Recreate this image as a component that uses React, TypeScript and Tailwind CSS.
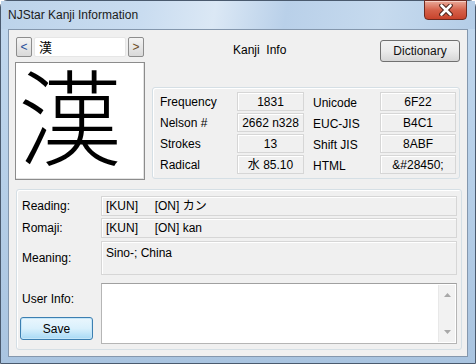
const font = { fontFamily: '"Liberation Sans", "Noto Sans CJK JP", sans-serif' };

// read-only field, the flat grey edit boxes of the dialog
function Field({ children, className = '' }: { children?: React.ReactNode; className?: string }) {
  return (
    <div
      className={`border border-[#d6d6d6] bg-[#f0f0f0] shadow-[inset_1px_1px_0_#ffffff] ${className}`}
    >
      {children}
    </div>
  );
}

const info = [
  ['Frequency', '1831', 'Unicode', '6F22'],
  ['Nelson #', '2662 n328', 'EUC-JIS', 'B4C1'],
  ['Strokes', '13', 'Shift JIS', '8ABF'],
  ['Radical', '水 85.10', 'HTML', '&#28450;'],
];

function NavButton({ children }: { children: React.ReactNode }) {
  return (
    <button className="flex h-[20px] w-[16px] items-center justify-center rounded-[2px] border border-[#8d8d8d] bg-gradient-to-b from-[#f4f4f4] to-[#d9d9d9] pb-[1px] text-[12px] leading-none text-[#1a1a1a]">
      {children}
    </button>
  );
}

export default function App() {
  return (
    <div className="h-[364px] w-[476px] overflow-hidden bg-white text-[12px] text-black" style={font}>
      <div className="flex h-full flex-col rounded-t-[7px] border border-[#4a5a6e] bg-gradient-to-b from-[#c2d8ee] via-[#b6cfe8] to-[#a9c4e0]">
        {/* title bar */}
        <div className="relative flex h-[28px] shrink-0 items-center bg-[linear-gradient(100deg,#bcd3ea_0%,#c9dcf0_30%,#dbe8f5_45%,#b9d0e9_60%,#c6daee_80%,#b4cde7_100%)] pl-[7px]">
          <span className="text-[12px] text-[#1b1b1b]">NJStar Kanji Information</span>
          <div className="absolute right-[8px] top-[-1px] flex h-[20px] w-[43px] items-center justify-center rounded-b-[4px] border border-[#6e2a20] bg-gradient-to-b from-[#e9a999] via-[#d5614a] to-[#c8432b] shadow-[inset_0_1px_0_#f5cfc5]">
            <svg width="14" height="12" viewBox="0 0 14 12">
              <path d="M2.5 1.5 L11.5 10.5 M11.5 1.5 L2.5 10.5" stroke="#4a2018" strokeWidth="4.6" strokeLinecap="round" />
              <path d="M2.5 1.5 L11.5 10.5 M11.5 1.5 L2.5 10.5" stroke="#ffffff" strokeWidth="2.6" strokeLinecap="round" />
            </svg>
          </div>
        </div>

        {/* client area */}
        <div className="mx-[7px] flex h-[328px] flex-col border border-[#8497ad] bg-[#f0f0f0] pl-[6px] pt-[7px]">
          <div className="flex gap-[7px]">
            {/* left: navigator and big glyph */}
            <div className="flex w-[130px] flex-col gap-[5px]">
              <div className="ml-[1px] flex items-center gap-[2px]">
                <NavButton>
                  <span className="text-[#1f4f9a]">&lt;</span>
                </NavButton>
                <div className="flex h-[20px] w-[92px] items-center rounded-[2px] border border-[#e6e6e6] bg-white pl-[4px] text-[13px] leading-none">
                  漢
                </div>
                <NavButton>
                  <span className="text-[#6a4a20]">&gt;</span>
                </NavButton>
              </div>
              <div className="h-[118px] border border-[#8c8c8c] bg-white shadow-[inset_-1px_-1px_0_#e3e3e3]">
                <svg width="128" height="116" viewBox="0 0 128 116">
                  <text
                    x="2"
                    y="95"
                    fontSize="104"
                    fontWeight="300"
                    fill="#000"
                    style={{ fontFamily: '"Noto Sans CJK JP", serif' }}
                  >
                    漢
                  </text>
                </svg>
              </div>
            </div>

            {/* right: header and code table */}
            <div className="flex w-[308px] flex-col">
              <div className="flex h-[50px] items-start">
                <span className="pl-[81px] pt-[4px] whitespace-pre">Kanji  Info</span>
                <button className="ml-auto mt-[3px] h-[22px] w-[80px] rounded-[3px] border border-[#707070] bg-gradient-to-b from-[#f2f2f2] via-[#ebebeb] to-[#d6d6d6] text-[12px] text-[#111]">
                  Dictionary
                </button>
              </div>
              <div className="flex h-[92px] flex-col gap-[2px] rounded-[3px] border border-[#d5dfe5] pt-[4px] pl-[7px] shadow-[inset_1px_1px_0_#ffffff]">
                {info.map(([l1, v1, l2, v2]) => (
                  <div key={l1} className="flex h-[19px] items-center">
                    <span className="w-[77px]">{l1}</span>
                    <Field className="flex h-[19px] w-[67px] items-center justify-center">{v1}</Field>
                    <span className="ml-[9px] w-[67px] pt-[2px]">{l2}</span>
                    <Field className="flex h-[19px] w-[76px] items-center justify-center">{v2}</Field>
                  </div>
                ))}
              </div>
            </div>
          </div>

          {/* readings and user notes */}
          <div className="ml-[1px] mt-[9px] flex h-[161px] w-[446px] flex-col rounded-[3px] border border-[#d5dfe5] pl-[5px] pt-[6px] shadow-[inset_1px_1px_0_#ffffff]">
            <div className="flex h-[20px] items-center">
              <span className="w-[79px]">Reading:</span>
              <Field className="flex h-[20px] w-[356px] items-center pl-[4px] whitespace-pre">
                {'[KUN]     [ON] カン'}
              </Field>
            </div>
            <div className="mt-[2px] flex h-[20px] items-center">
              <span className="w-[79px]">Romaji:</span>
              <Field className="flex h-[20px] w-[356px] items-center pl-[4px] whitespace-pre">
                {'[KUN]     [ON] kan'}
              </Field>
            </div>
            <div className="mt-[3px] flex h-[34px] items-center">
              <span className="w-[79px]">Meaning:</span>
              <Field className="h-[34px] w-[356px] self-start pl-[4px] pt-[2px]">Sino-; China</Field>
            </div>
            <div className="mt-[8px] flex h-[61px]">
              <div className="flex w-[79px] flex-col pt-[7px]">
                <span>User Info:</span>
                <button className="mt-auto mb-[4px] ml-[-2px] h-[23px] w-[73px] rounded-[3px] border border-[#3c7fb1] bg-gradient-to-b from-[#eaf6fd] via-[#d9f0fc] to-[#a7d9f5] text-[12px] shadow-[inset_0_0_0_1px_#c5e6f8]">
                  Save
                </button>
              </div>
              <div className="flex h-[61px] w-[356px] border border-[#b5b5b5] border-t-[#a0a0a0] bg-white">
                <div className="flex-1" />
                <div className="my-[1px] mr-[1px] flex w-[17px] flex-col items-center justify-between border-l border-[#e8e8e8] bg-[#f2f2f2] py-[8px]">
                  <svg width="7" height="4" viewBox="0 0 7 4">
                    <path d="M0 4 L3.5 0 L7 4 Z" fill="#a8a8a8" />
                  </svg>
                  <svg width="7" height="4" viewBox="0 0 7 4">
                    <path d="M0 0 L3.5 4 L7 0 Z" fill="#a8a8a8" />
                  </svg>
                </div>
              </div>
            </div>
          </div>
        </div>
      </div>
    </div>
  );
}
